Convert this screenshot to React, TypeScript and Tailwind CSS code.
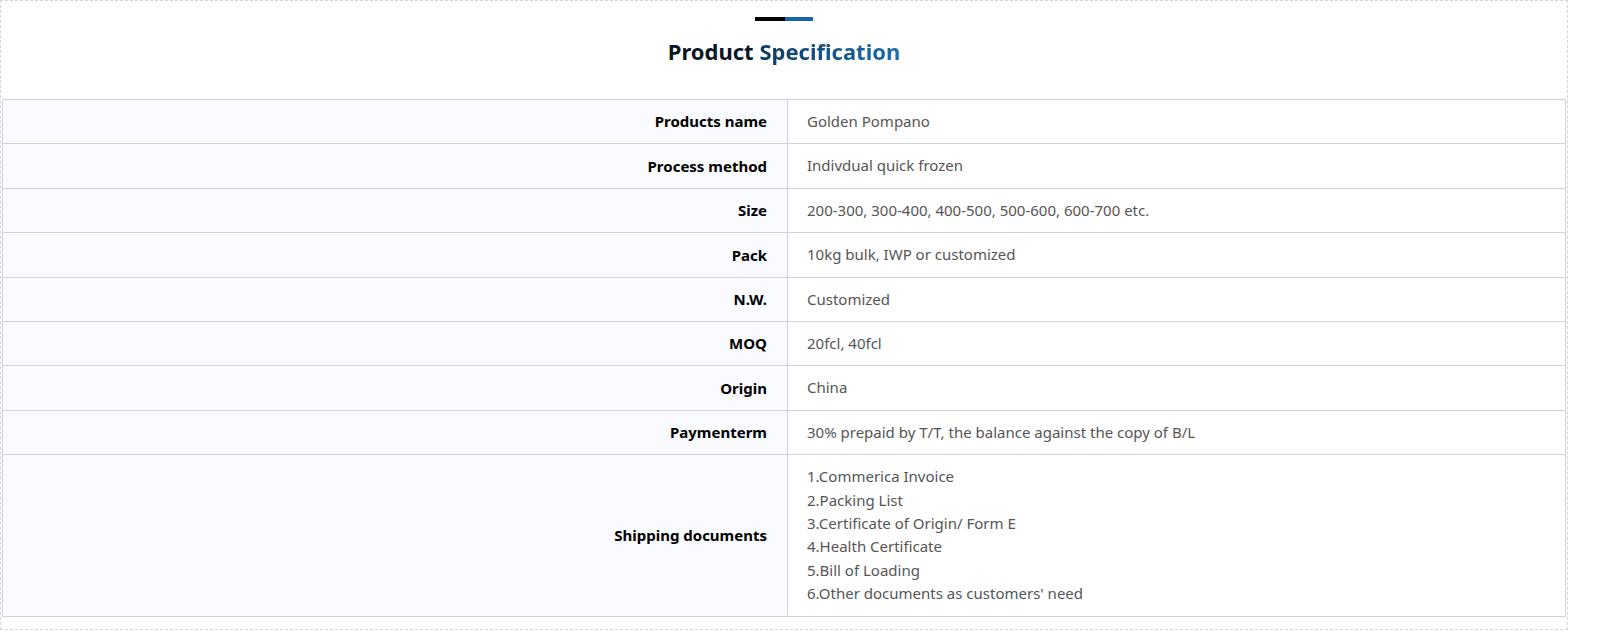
import React from "react";

const rows: [string, React.ReactNode][] = [
  ["Products name", "Golden Pompano"],
  ["Process method", "Indivdual quick frozen"],
  ["Size", "200-300, 300-400, 400-500, 500-600, 600-700 etc."],
  ["Pack", "10kg bulk, IWP or customized"],
  ["N.W.", "Customized"],
  ["MOQ", "20fcl, 40fcl"],
  ["Origin", "China"],
  ["Paymenterm", "30% prepaid by T/T, the balance against the copy of B/L"],
  [
    "Shipping documents",
    <>
      1.Commerica Invoice<br />2.Packing List<br />3.Certificate of Origin/ Form E<br />
      4.Health Certificate<br />5.Bill of Loading<br />6.Other documents as customers' need
    </>,
  ],
];

export default function App() {
  return (
    <div className="bg-white w-[1600px] h-[642px] [font-family:'Liberation_Sans',Arial,sans-serif]">
      <div className="w-[1568px] h-[630px] border border-dashed border-[#d4d4d4] px-[1px]">
        <div className="flex justify-center pt-[16px]">
          <div className="w-[30px] h-[4px] bg-black" />
          <div className="w-[28px] h-[4px] bg-[#1565a8]" />
        </div>
        <h2 className="text-center text-[22px] font-bold mt-[15px] leading-[30px] text-[#0a1626]">
          Product{" "}
          <span className="bg-gradient-to-r from-[#0e3a62] to-[#1a6db0] bg-clip-text text-transparent">
            Specification
          </span>
        </h2>
        <table className="mt-[33px] w-full border-collapse text-[15px]">
          <tbody>
            {rows.map(([k, v]) => (
              <tr key={k}>
                <td className="w-[785px] border border-[#cfd3d8] bg-[#f9fbfe] text-right font-bold text-black pr-[20px] p-0">
                  {k}
                </td>
                <td className="border border-[#cfd3d8] text-[#555] pl-[19px] py-[10px] leading-[23.4px]">
                  {v}
                </td>
              </tr>
            ))}
          </tbody>
        </table>
      </div>
    </div>
  );
}
